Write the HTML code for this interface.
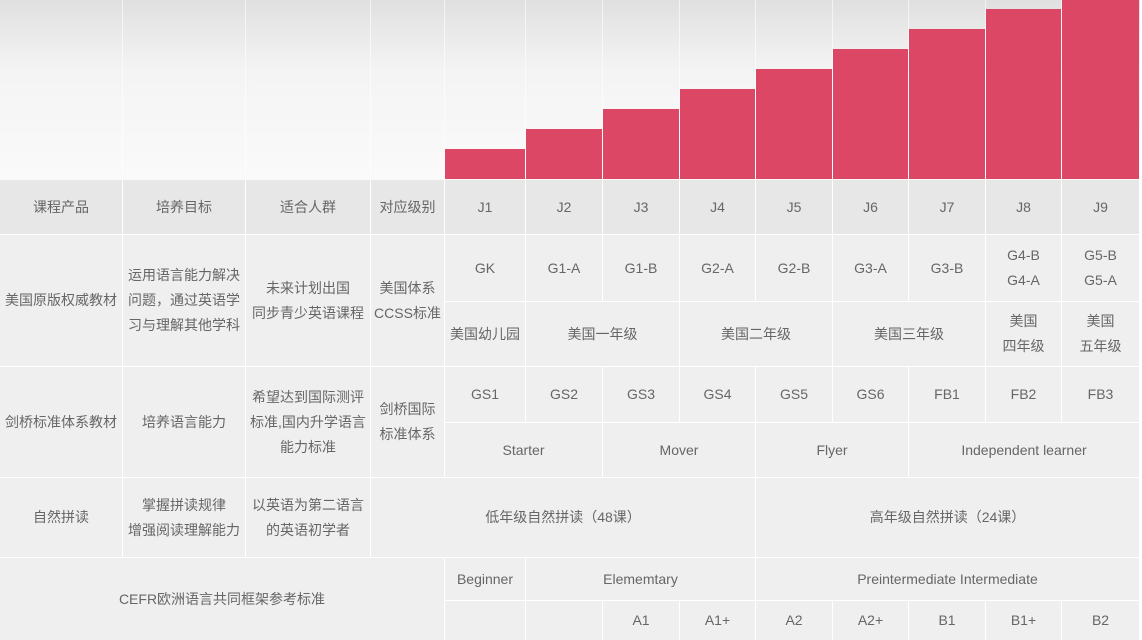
<!DOCTYPE html>
<html><head><meta charset="utf-8"><style>
body{margin:0;width:1142px;height:640px;background:#fff;position:relative;overflow:hidden;font-family:"Liberation Sans","Noto Sans CJK SC",sans-serif;}
.chart{position:absolute;left:0;top:0;width:1140px;height:180px;background:linear-gradient(#e0e0e0,#f4f4f4 40%,#fafafa);}
.vl{position:absolute;top:0;height:180px;width:1px;background:#fff;opacity:.6}
.bar{position:absolute;background:#dc4766;}
.c{position:absolute;display:flex;align-items:center;justify-content:center;text-align:center;color:#666;font-size:14px;line-height:25px;background:#efefef;box-sizing:border-box;}
.h{background:#e7e7e7;}
</style></head><body>
<div class="chart"></div>
<div id="g"></div>
<script>
var X=[0,123,246,371,445,526,603,680,756,833,909,986,1062,1140];
var out='';
for(var i=1;i<13;i++)out+='<div class="vl" style="left:'+(X[i]-1)+'px"></div>';
var tops=[149,129,109,89,69,49,29,9,0];
for(var j=0;j<9;j++){out+='<div class="bar" style="left:'+X[4+j]+'px;top:'+tops[j]+'px;width:'+(X[5+j]-X[4+j]-1)+'px;height:'+(179-tops[j])+'px"></div>';}
function c(a,b,t,bt,txt,cls){out+='<div class="c '+(cls||'')+'" style="left:'+X[a]+'px;width:'+(X[b+1]-X[a]-1)+'px;top:'+t+'px;height:'+(bt-t)+'px">'+txt+'</div>';}
var hd=['课程产品','培养目标','适合人群','对应级别','J1','J2','J3','J4','J5','J6','J7','J8','J9'];
for(var i=0;i<13;i++)c(i,i,180,234,hd[i],'h');
c(0,0,235,366,'美国原版权威教材');c(1,1,235,366,'运用语言能力解决<br>问题，通过英语学<br>习与理解其他学科');
c(2,2,235,366,'未来计划出国<br>同步青少英语课程');c(3,3,235,366,'美国体系<br>CCSS标准');
var r1=['GK','G1-A','G1-B','G2-A','G2-B','G3-A','G3-B','G4-B<br>G4-A','G5-B<br>G5-A'];
for(var j=0;j<9;j++)c(4+j,4+j,235,301,r1[j]);
c(4,4,302,366,'美国幼儿园');c(5,6,302,366,'美国一年级');c(7,8,302,366,'美国二年级');c(9,10,302,366,'美国三年级');c(11,11,302,366,'美国<br>四年级');c(12,12,302,366,'美国<br>五年级');
c(0,0,367,477,'剑桥标准体系教材');c(1,1,367,477,'培养语言能力');c(2,2,367,477,'希望达到国际测评<br>标准,国内升学语言<br>能力标准');c(3,3,367,477,'剑桥国际<br>标准体系');
var r2=['GS1','GS2','GS3','GS4','GS5','GS6','FB1','FB2','FB3'];
for(var j=0;j<9;j++)c(4+j,4+j,367,422,r2[j]);
c(4,5,423,477,'Starter');c(6,7,423,477,'Mover');c(8,9,423,477,'Flyer');c(10,12,423,477,'Independent learner');
c(0,0,478,557,'自然拼读');c(1,1,478,557,'掌握拼读规律<br>增强阅读理解能力');c(2,2,478,557,'以英语为第二语言<br>的英语初学者');
c(3,7,478,557,'低年级自然拼读（48课）');c(8,12,478,557,'高年级自然拼读（24课）');
c(0,3,558,640,'CEFR欧洲语言共同框架参考标准');
c(4,4,558,600,'Beginner');c(5,7,558,600,'Elememtary');c(8,12,558,600,'Preintermediate Intermediate');
var r4=['','','A1','A1+','A2','A2+','B1','B1+','B2'];
for(var j=0;j<9;j++)c(4+j,4+j,601,640,r4[j]);
document.getElementById('g').innerHTML=out;
</script>
</body></html>
